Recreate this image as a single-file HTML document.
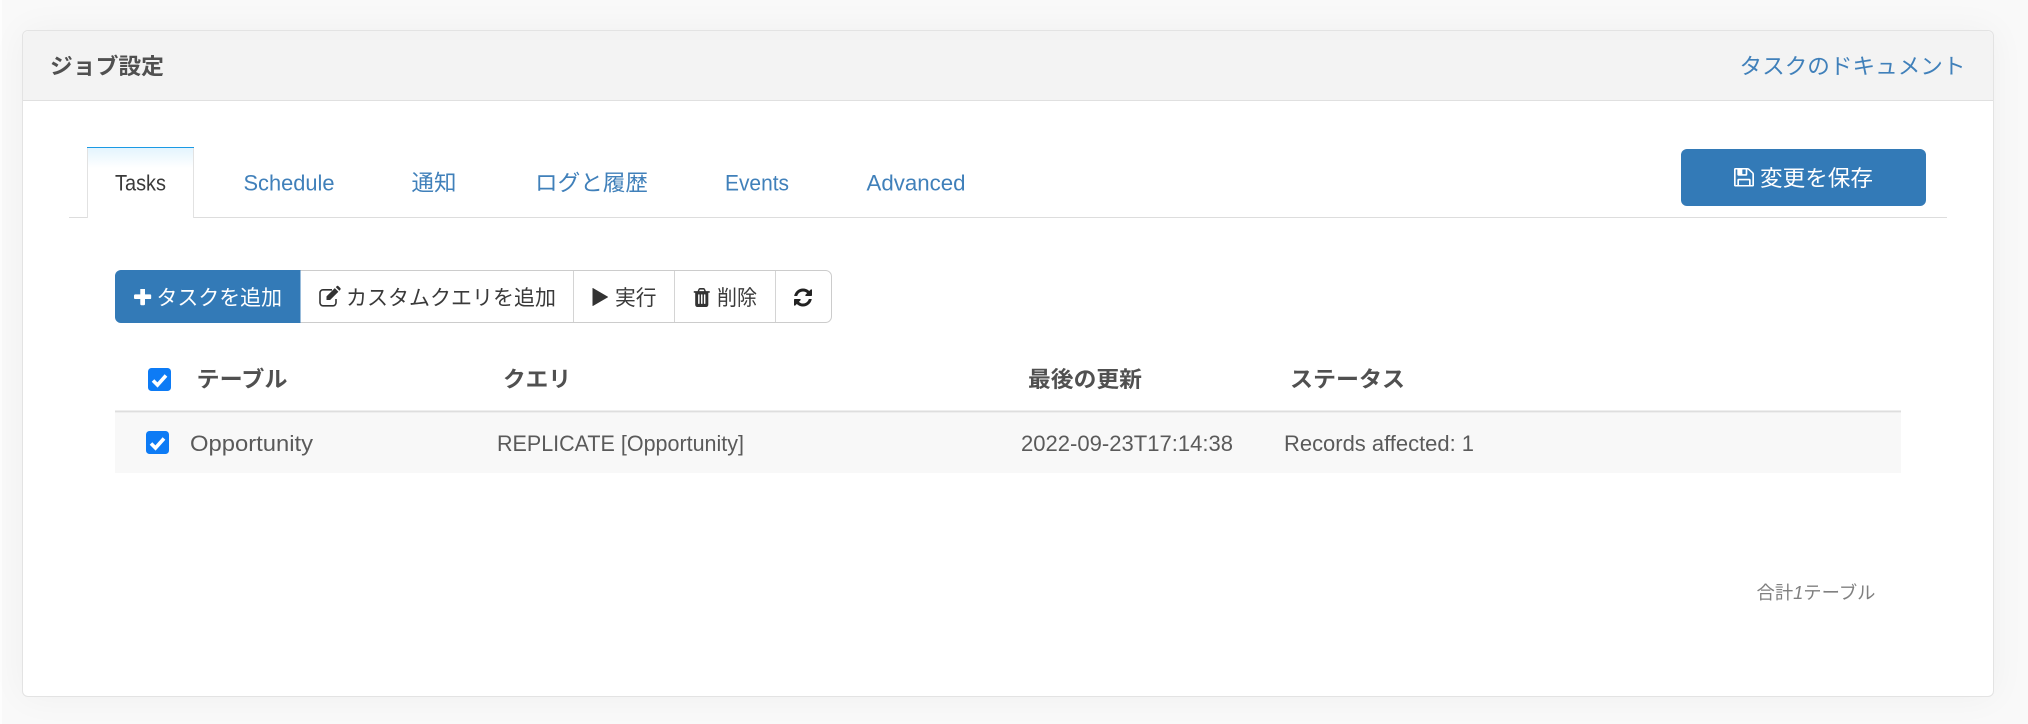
<!DOCTYPE html>
<html lang="ja"><head><meta charset="utf-8"><title>ジョブ設定</title>
<style>
html,body{margin:0;padding:0;width:2028px;height:724px;overflow:hidden;background:#f9f9f9}
#edge{position:absolute;left:0;top:0;width:2028px;height:724px;box-sizing:border-box;border-left:2px solid #fdfdfd}
#card{position:absolute;left:22px;top:30px;width:1972px;height:667px;box-sizing:border-box;background:#fff;border:1px solid #e3e3e3;border-radius:6px;box-shadow:0 0 36px rgba(0,0,0,.045)}
svg#s{position:absolute;left:0;top:0}
text{font-family:"Liberation Sans","Noto Sans CJK JP",sans-serif;font-size:22px}
.l{fill:#4080ba}.b{font-weight:700;fill:#505050}.t{fill:#5a5a5a}.d{fill:#3a3a3a}.w{fill:#fff}
</style></head><body>
<div id="edge"></div><div id="card"></div>
<svg id="s" width="2028" height="724" viewBox="0 0 2028 724" xmlns="http://www.w3.org/2000/svg">
<defs>
<linearGradient id="g" x1="0" y1="0" x2="0" y2="1"><stop offset="0" stop-color="#e3f4fe"/><stop offset="1" stop-color="#fff"/></linearGradient>
<clipPath id="hc"><path d="M23 100V37a6 6 0 0 1 6-6H1987a6 6 0 0 1 6 6V100Z"/></clipPath>
</defs>
<!-- panel header -->
<rect x="23" y="31" width="1970" height="69" fill="#f3f3f3" clip-path="url(#hc)"/>
<rect x="23" y="100" width="1970" height="1" fill="#e0e0e0"/>
<text class="b" x="50" y="74" textLength="114" lengthAdjust="spacingAndGlyphs">ジョブ設定</text>
<text class="l" x="1739.5" y="74" textLength="226" lengthAdjust="spacingAndGlyphs">タスクのドキュメント</text>
<!-- tabs -->
<rect x="69" y="217" width="1878" height="1" fill="#ddd"/>
<rect x="88" y="148" width="105" height="20" fill="url(#g)"/>
<rect x="88" y="168" width="105" height="50" fill="#fff"/>
<rect x="87" y="148" width="1" height="70" fill="#e2e2e2"/><rect x="193" y="148" width="1" height="70" fill="#e2e2e2"/>
<rect x="87" y="147" width="107" height="1" fill="#1b9ae4"/>
<text class="d" x="115" y="190.5" textLength="51" lengthAdjust="spacingAndGlyphs">Tasks</text>
<text class="l" x="243.5" y="190.5" textLength="91" lengthAdjust="spacingAndGlyphs">Schedule</text>
<text class="l" x="411.5" y="190.5" textLength="45" lengthAdjust="spacingAndGlyphs">通知</text>
<text class="l" x="535" y="190.5" textLength="113" lengthAdjust="spacingAndGlyphs">ログと履歴</text>
<text class="l" x="725" y="190.5" textLength="64" lengthAdjust="spacingAndGlyphs">Events</text>
<text class="l" x="866.5" y="190.5" textLength="99" lengthAdjust="spacingAndGlyphs">Advanced</text>
<!-- save -->
<rect x="1681" y="149" width="245" height="57" rx="6" fill="#337ab7"/>
<svg x="1734" y="168" width="20" height="18.5" viewBox="128 128 1536 1536" preserveAspectRatio="none"><path fill="#fff" d="M512 1536h768v-384h-768v384zm896 0h128v-896q0-14-10-38.5t-20-34.5l-281-281q-10-10-34-20t-39-10v416q0 40-28 68t-68 28h-576q-40 0-68-28t-28-68v-416h-128v1280h128v-416q0-40 28-68t68-28h832q40 0 68 28t28 68v416zm-384-928v-320q0-13-9.5-22.5t-22.5-9.5h-192q-13 0-22.5 9.5t-9.5 22.5v320q0 13 9.5 22.5t22.5 9.5h192q13 0 22.5-9.5t9.5-22.5zm640 32v928q0 40-28 68t-68 28h-1344q-40 0-68-28t-28-68v-1344q0-40 28-68t68-28h928q40 0 88 20t76 48l280 280q28 28 48 76t20 88z"/></svg>
<text class="w" x="1760" y="186" textLength="113" lengthAdjust="spacingAndGlyphs">変更を保存</text>
<!-- toolbar -->
<rect x="115.5" y="270.5" width="716" height="52" rx="6" fill="#fff" stroke="#ccc"/>
<path d="M300.5 270H121a6 6 0 0 0-6 6v41a6 6 0 0 0 6 6H300.5Z" fill="#337ab7"/>
<rect x="573" y="271" width="1" height="51" fill="#d4d4d4"/><rect x="674" y="271" width="1" height="51" fill="#d4d4d4"/><rect x="775" y="271" width="1" height="51" fill="#d4d4d4"/>
<svg x="134" y="289" width="17.3" height="17" viewBox="192 192 1408 1408" preserveAspectRatio="none"><path fill="#fff" d="M1600 736v192q0 40-28 68t-68 28h-416v416q0 40-28 68t-68 28h-192q-40 0-68-28t-28-68v-416h-416q-40 0-68-28t-28-68v-192q0-40 28-68t68-28h416v-416q0-40 28-68t68-28h192q40 0 68 28t28 68v416h416q40 0 68 28t28 68z"/></svg>
<text class="w" x="156.5" y="305" style="font-size:21px" textLength="125.5" lengthAdjust="spacingAndGlyphs">タスクを追加</text>
<!-- edit icon -->
<path d="M332 289.8H323a3 3 0 0 0-3 3v10a3 3 0 0 0 3 3h10a3 3 0 0 0 3-3V299" fill="none" stroke="#333" stroke-width="1.6"/>
<path d="M326.5 300v-3.6l8.3-8.3 3.6 3.6-8.3 8.3zM335.8 287.1l.9-.9q.9-.9 1.8 0l1.8 1.8q.9.9 0 1.8l-.9.9z" fill="#333"/>
<text class="d" x="346" y="305" style="font-size:21px" textLength="210" lengthAdjust="spacingAndGlyphs">カスタムクエリを追加</text>
<svg x="592.5" y="288" width="15.5" height="18" viewBox="192 120 1408 1552" preserveAspectRatio="none"><path fill="#333" d="M1576 927l-1328 738q-23 13-39.5 3t-16.5-36v-1472q0-26 16.5-36t39.5 3l1328 738q23 13 23 31t-23 31z"/></svg>
<text class="d" x="615" y="305" style="font-size:21px" textLength="41.5" lengthAdjust="spacingAndGlyphs">実行</text>
<svg x="693" y="288" width="17.5" height="19" viewBox="128 128 1536 1536" preserveAspectRatio="none"><path fill="#333" d="M704 1376v-704q0-14-9-23t-23-9h-64q-14 0-23 9t-9 23v704q0 14 9 23t23 9h64q14 0 23-9t9-23zm256 0v-704q0-14-9-23t-23-9h-64q-14 0-23 9t-9 23v704q0 14 9 23t23 9h64q14 0 23-9t9-23zm256 0v-704q0-14-9-23t-23-9h-64q-14 0-23 9t-9 23v704q0 14 9 23t23 9h64q14 0 23-9t9-23zm-544-992h448l-48-117q-7-9-17-11h-317q-10 2-17 11zm928 32v64q0 14-9 23t-23 9h-96v948q0 83-47 143.5t-113 60.5h-832q-66 0-113-58.5t-47-141.5v-952h-96q-14 0-23-9t-9-23v-64q0-14 9-23t23-9h309l70-167q15-37 54-63t79-26h320q40 0 79 26t54 63l70 167h309q14 0 23 9t9 23z"/></svg>
<text class="d" x="717" y="305" style="font-size:21px" textLength="40" lengthAdjust="spacingAndGlyphs">削除</text>
<svg x="794" y="288.5" width="18" height="18" viewBox="128 128 1536 1536" preserveAspectRatio="none"><path fill="#222" d="M1639 1056q0 5-1 7-64 268-268 434.5t-478 166.5q-146 0-282.5-55t-243.5-157l-129 129q-19 19-45 19t-45-19-19-45v-448q0-26 19-45t45-19h448q26 0 45 19t19 45-19 45l-137 137q71 66 161 102t187 36q134 0 250-65t186-179q11-17 53-117 8-23 30-23h192q13 0 22.5 9.5t9.5 22.5zm25-800v448q0 26-19 45t-45 19h-448q-26 0-45-19t-19-45 19-45l138-138q-148-137-349-137-134 0-250 65t-186 179q-11 17-53 117-8 23-30 23h-199q-13 0-22.5-9.5t-9.5-22.5v-7q65-268 270-434.5t480-166.5q146 0 284 55.5t245 156.5l130-129q19-19 45-19t45 19 19 45z"/></svg>
<!-- table -->
<rect x="115" y="413" width="1786" height="60" fill="#f8f8f8"/>
<rect x="115" y="410.5" width="1786" height="2" fill="#dedede"/>
<rect x="148" y="368" width="23" height="23" rx="3.5" fill="#0d7bf5"/>
<path d="M153 380.5l4.5 4.5 8.5-9.5" fill="none" stroke="#fff" stroke-width="3.6"/>
<rect x="146" y="431" width="23" height="23" rx="3.5" fill="#0d7bf5"/>
<path d="M151 443.5l4.5 4.5 8.5-9.5" fill="none" stroke="#fff" stroke-width="3.6"/>
<text class="b" x="196.5" y="387" textLength="91" lengthAdjust="spacingAndGlyphs">テーブル</text>
<text class="b" x="503" y="387" textLength="68" lengthAdjust="spacingAndGlyphs">クエリ</text>
<text class="b" x="1028" y="387" textLength="114" lengthAdjust="spacingAndGlyphs">最後の更新</text>
<text class="b" x="1290" y="387" textLength="115" lengthAdjust="spacingAndGlyphs">ステータス</text>
<text class="t" x="190" y="451" textLength="123" lengthAdjust="spacingAndGlyphs">Opportunity</text>
<text class="t" x="497" y="451" textLength="247" lengthAdjust="spacingAndGlyphs">REPLICATE [Opportunity]</text>
<text class="t" x="1021" y="451" textLength="212" lengthAdjust="spacingAndGlyphs">2022-09-23T17:14:38</text>
<text class="t" x="1284" y="451" textLength="190" lengthAdjust="spacingAndGlyphs">Records affected: 1</text>
<text x="1756.5" y="599" fill="#808080" style="font-size:18px" textLength="119" lengthAdjust="spacingAndGlyphs">合計<tspan font-style="italic">1</tspan>テーブル</text>
</svg>
</body></html>
